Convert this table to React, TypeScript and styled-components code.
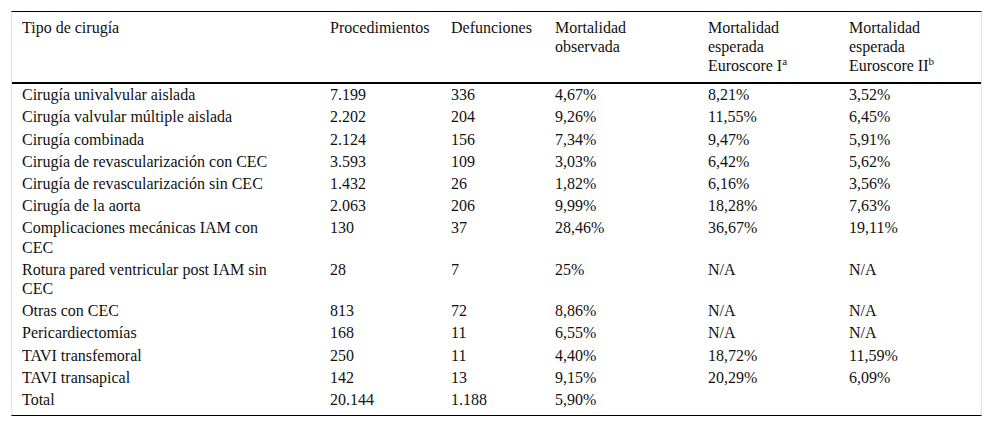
import React from "react";
import styled, { createGlobalStyle } from "styled-components";

const GlobalStyle = createGlobalStyle`
  html, body { margin: 0; padding: 0; background: #ffffff; }
  body { font-family: "Liberation Serif", "Times New Roman", serif; color: #111; }
`;

const Page = styled.div`
  padding: 11px 10px 11px 11px;
  font-family: "Liberation Serif", "Times New Roman", serif;
`;

const Frame = styled.div`
  border-left: 1px solid #e4e4e4;
  border-right: 1px solid #e4e4e4;
  border-top: 1px solid #000;
  border-bottom: 1px solid #000;
  width: 969px;
`;

const Table = styled.table`
  width: 100%;
  border-collapse: collapse;
  table-layout: fixed;
  font-family: "Liberation Serif", "Times New Roman", serif;
  font-size: 16px;
  line-height: 19.2px;
  color: #111;
`;

const HeadCell = styled.th<{ $first?: boolean }>`
  font-family: "Liberation Serif", "Times New Roman", serif;
  font-weight: normal;
  text-align: left;
  vertical-align: top;
  padding: 5.5px ${(p) => (p.$first ? "40px" : "10px")} 7px 10px;
  border-bottom: 2px solid #000;
`;

const Cell = styled.td<{ $first?: boolean; $last?: boolean }>`
  font-family: "Liberation Serif", "Times New Roman", serif;
  vertical-align: top;
  text-align: left;
  padding: 1px ${(p) => (p.$first ? "40px" : "10px")} ${(p) => (p.$last ? "6px" : "2px")} 10px;
`;

const Sup = styled.sup`
  font-size: 11px;
  line-height: 0;
  vertical-align: 6px;
`;

const widths = [308, 121, 104, 153, 141, 142];

type Row = [string, string, string, string, string, string];

const rows: Row[] = [
  ["Cirugía univalvular aislada", "7.199", "336", "4,67%", "8,21%", "3,52%"],
  ["Cirugía valvular múltiple aislada", "2.202", "204", "9,26%", "11,55%", "6,45%"],
  ["Cirugía combinada", "2.124", "156", "7,34%", "9,47%", "5,91%"],
  ["Cirugía de revascularización con CEC", "3.593", "109", "3,03%", "6,42%", "5,62%"],
  ["Cirugía de revascularización sin CEC", "1.432", "26", "1,82%", "6,16%", "3,56%"],
  ["Cirugía de la aorta", "2.063", "206", "9,99%", "18,28%", "7,63%"],
  ["Complicaciones mecánicas IAM con CEC", "130", "37", "28,46%", "36,67%", "19,11%"],
  ["Rotura pared ventricular post IAM sin CEC", "28", "7", "25%", "N/A", "N/A"],
  ["Otras con CEC", "813", "72", "8,86%", "N/A", "N/A"],
  ["Pericardiectomías", "168", "11", "6,55%", "N/A", "N/A"],
  ["TAVI transfemoral", "250", "11", "4,40%", "18,72%", "11,59%"],
  ["TAVI transapical", "142", "13", "9,15%", "20,29%", "6,09%"],
  ["Total", "20.144", "1.188", "5,90%", "", ""],
];

export default function App() {
  return (
    <Page>
      <GlobalStyle />
      <Frame>
        <Table>
          <colgroup>
            {widths.map((w, i) => (
              <col key={i} style={{ width: w }} />
            ))}
          </colgroup>
          <thead>
            <tr>
              <HeadCell $first>Tipo de cirugía</HeadCell>
              <HeadCell>Procedimientos</HeadCell>
              <HeadCell>Defunciones</HeadCell>
              <HeadCell>Mortalidad observada</HeadCell>
              <HeadCell>
                Mortalidad esperada Euroscore I<Sup>a</Sup>
              </HeadCell>
              <HeadCell>
                Mortalidad esperada Euroscore II<Sup>b</Sup>
              </HeadCell>
            </tr>
          </thead>
          <tbody>
            {rows.map((r, ri) => (
              <tr key={ri}>
                {r.map((c, ci) => (
                  <Cell key={ci} $first={ci === 0} $last={ri === rows.length - 1}>
                    {c}
                  </Cell>
                ))}
              </tr>
            ))}
          </tbody>
        </Table>
      </Frame>
    </Page>
  );
}
